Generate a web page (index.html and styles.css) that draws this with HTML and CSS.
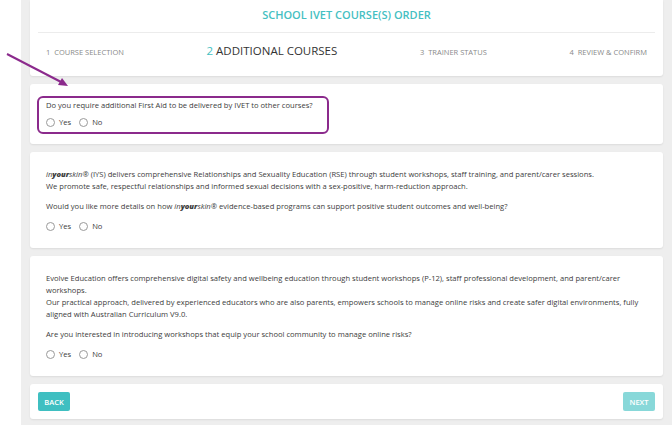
FILE: index.html
```html
<!DOCTYPE html>
<html>
<head>
<meta charset="utf-8">
<link rel="stylesheet" href="styles.css">
</head>
<body>
<div class="page">
  <div class="card header">
    <h1 class="title">SCHOOL IVET COURSE(S) ORDER</h1>
    <div class="steps">
      <span class="step">1&nbsp; COURSE SELECTION</span>
      <span class="step active"><span class="num">2</span> ADDITIONAL COURSES</span>
      <span class="step">3&nbsp; TRAINER STATUS</span>
      <span class="step">4&nbsp; REVIEW &amp; CONFIRM</span>
    </div>
  </div>

  <div class="card q-card first">
    <div class="highlight"></div>
    <p class="q">Do you require additional First Aid to be delivered by IVET to other courses?</p>
    <div class="radios">
      <label class="radio"><span class="circle"></span>Yes</label>
      <label class="radio"><span class="circle"></span>No</label>
    </div>
  </div>

  <div class="card q-card">
    <p class="txt"><i>in<b>your</b>skin</i>® (IYS) delivers comprehensive Relationships and Sexuality Education (RSE) through student workshops, staff training, and parent/carer sessions.<br>We promote safe, respectful relationships and informed sexual decisions with a sex-positive, harm-reduction approach.</p>
    <p class="q">Would you like more details on how <i>in<b>your</b>skin</i>® evidence-based programs can support positive student outcomes and well-being?</p>
    <div class="radios">
      <label class="radio"><span class="circle"></span>Yes</label>
      <label class="radio"><span class="circle"></span>No</label>
    </div>
  </div>

  <div class="card q-card">
    <p class="txt">Evolve Education offers comprehensive digital safety and wellbeing education through student workshops (P-12), staff professional development, and parent/carer workshops.<br>Our practical approach, delivered by experienced educators who are also parents, empowers schools to manage online risks and create safer digital environments, fully aligned with Australian Curriculum V9.0.</p>
    <p class="q">Are you interested in introducing workshops that equip your school community to manage online risks?</p>
    <div class="radios">
      <label class="radio"><span class="circle"></span>Yes</label>
      <label class="radio"><span class="circle"></span>No</label>
    </div>
  </div>

  <div class="card nav">
    <button class="btn">BACK</button>
    <button class="btn disabled">NEXT</button>
  </div>
</div>
<svg class="arrow" width="80" height="100" viewBox="0 0 80 100">
  <line x1="7" y1="54" x2="63" y2="83" stroke="#8b2a8c" stroke-width="2"/>
  <polygon points="68,86 58,85 62,78" fill="#8b2a8c"/>
</svg>
</body>
</html>
```
FILE: styles.css
```css
html, body {
  margin: 0;
  padding: 0;
  background: #ffffff;
  font-family: "Open Sans", "Noto Sans", sans-serif;
  color: #3c3c3c;
}
.page {
  margin-left: 21px;
  background: #eeeeee;
  padding: 0 9px 7px 9px;
  min-height: 425px;
  box-sizing: border-box;
}
.card {
  background: #fff;
  border-radius: 3px;
  box-shadow: 0 1px 2px rgba(0,0,0,0.08);
  margin-bottom: 8px;
  position: relative;
}
.header {
  padding: 0 8px;
  height: 76px;
  border-radius: 0 0 3px 3px;
}
.title {
  margin: 0;
  padding-top: 7px;
  height: 25px;
  border-bottom: 1px solid #ececec;
  text-align: center;
  font-size: 11px;
  font-weight: 600;
  color: #45bfc2;
  line-height: 16px;
  box-sizing: content-box;
}
.steps {
  display: flex;
  justify-content: space-between;
  align-items: baseline;
  padding: 0 8px;
  height: 38px;
  line-height: 36px;
}
.step {
  font-size: 7.5px;
  color: #8a8a8a;
}
.step.active {
  font-size: 11.5px;
  color: #333;
}
.num { color: #45bfc2; }
.q-card {
  padding: 16px 16px 16px 16px;
  font-size: 7.6px;
  line-height: 12px;
}
.q-card.first { padding-top: 15px; }
.highlight {
  position: absolute;
  left: 7px;
  top: 12px;
  width: 292px;
  height: 38px;
  border: 2px solid #8b2a8c;
  border-radius: 6px;
  box-sizing: border-box;
}
.txt, .q { margin: 0 0 8px 0; }
.first .q { margin-bottom: 5px; }
.txt i, .q i { font-style: italic; }
.txt b, .q b { font-weight: 800; }
.radios {
  display: flex;
  gap: 8px;
  height: 12px;
  align-items: center;
}
.radio {
  display: flex;
  align-items: center;
  gap: 4px;
}
.circle {
  width: 7px;
  height: 7px;
  border: 1px solid #9a9a9a;
  border-radius: 50%;
  background: #fff;
}
.nav {
  display: flex;
  justify-content: space-between;
  padding: 8px;
}
.btn {
  font-family: "Open Sans", sans-serif;
  background: #3fbfc1;
  color: #fff;
  border: none;
  border-radius: 2px;
  height: 19px;
  width: 32px;
  padding: 0;
  font-size: 7.5px;
  font-weight: 600;
}
.btn.disabled { background: #88d8d9; }
.arrow {
  position: absolute;
  left: 0;
  top: 0;
}
```
